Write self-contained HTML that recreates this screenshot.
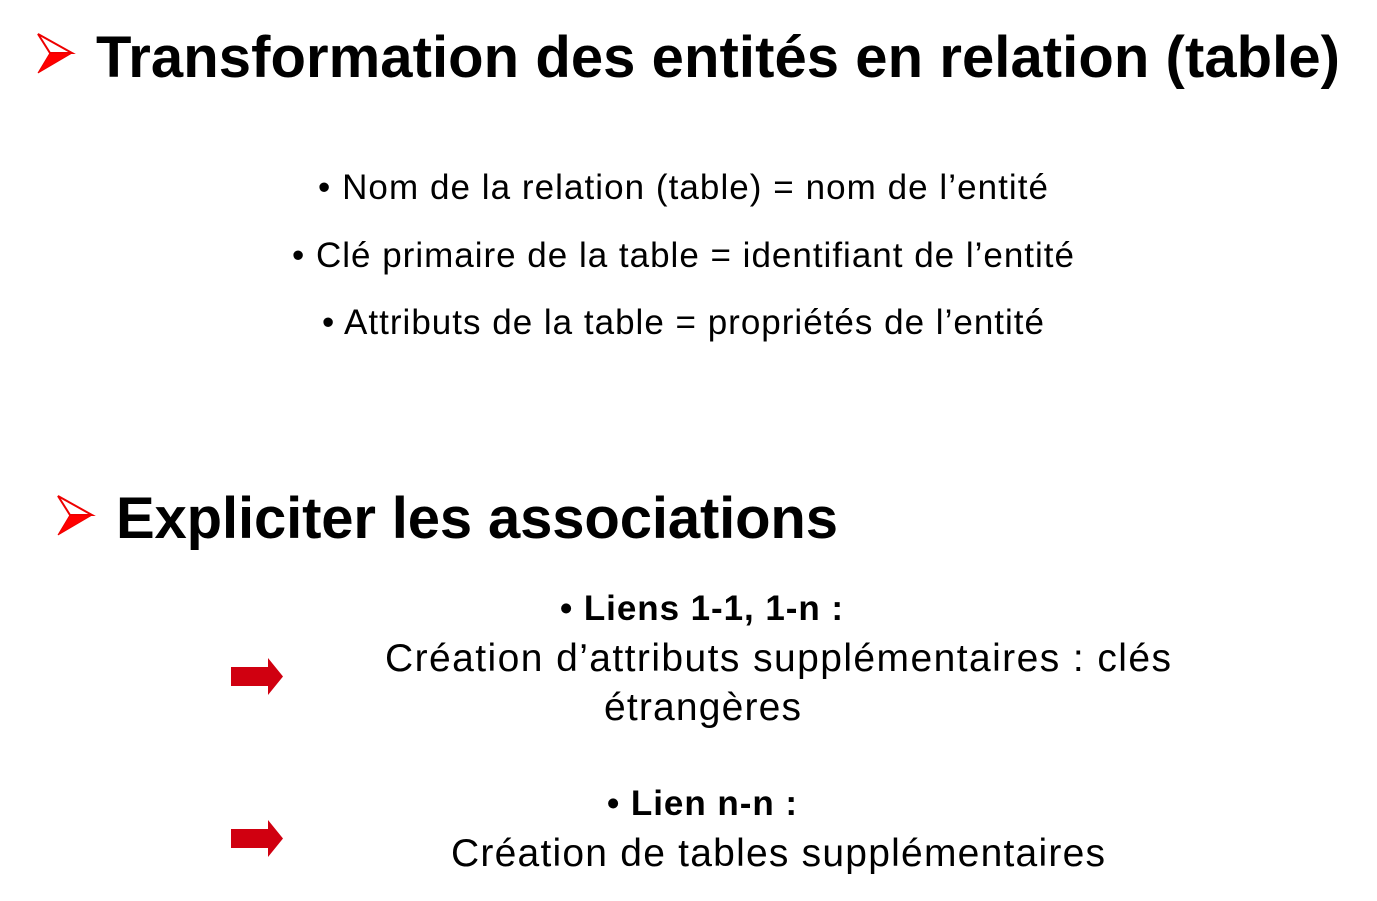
<!DOCTYPE html>
<html><head><meta charset="utf-8"><style>
html,body{margin:0;padding:0;background:#fff;width:1377px;height:901px;overflow:hidden}
svg text{font-family:"Liberation Sans",Arial,sans-serif;fill:#000}
</style></head><body>
<svg width="1377" height="901" viewBox="0 0 1377 901" xmlns="http://www.w3.org/2000/svg">
<path d="M38,34 L72,53 L50,53 Z" fill="#fff" stroke="#e00" stroke-width="2"/>
<path d="M50,53 L72,53 L38,73 Z" fill="#f00" stroke="#e00" stroke-width="1"/>
<text x="96" y="77" font-size="58" font-weight="bold" textLength="1244" lengthAdjust="spacing">Transformation des entités en relation (table)</text>
<text x="318" y="199" font-size="35" textLength="730" lengthAdjust="spacing">• Nom de la relation (table) = nom de l’entité</text>
<text x="292" y="267" font-size="35" textLength="782" lengthAdjust="spacing">• Clé primaire de la table = identifiant de l’entité</text>
<text x="322" y="334" font-size="35" textLength="722" lengthAdjust="spacing">• Attributs de la table = propriétés de l’entité</text>
<path d="M58,496 L92,515 L70,515 Z" fill="#fff" stroke="#e00" stroke-width="2"/>
<path d="M70,515 L92,515 L58,535 Z" fill="#f00" stroke="#e00" stroke-width="1"/>
<text x="116" y="538" font-size="58" font-weight="bold" textLength="722" lengthAdjust="spacing">Expliciter les associations</text>
<text x="560" y="620" font-size="35" font-weight="bold" textLength="283" lengthAdjust="spacing">• Liens 1-1, 1-n :</text>
<text x="385" y="671" font-size="39" textLength="786" lengthAdjust="spacing">Création d’attributs supplémentaires :  clés</text>
<text x="604" y="720" font-size="39" textLength="197" lengthAdjust="spacing">étrangères</text>
<text x="607" y="815" font-size="35" font-weight="bold" textLength="190" lengthAdjust="spacing">• Lien n-n :</text>
<text x="451" y="866" font-size="39" textLength="654" lengthAdjust="spacing">Création de tables supplémentaires</text>
<path d="M231,667 L268,667 L268,658 L283,676.5 L268,695 L268,686 L231,686 Z" fill="#d00010"/>
<path d="M231,829 L268,829 L268,820 L283,838.5 L268,857 L268,848 L231,848 Z" fill="#d00010"/>
</svg>
</body></html>
